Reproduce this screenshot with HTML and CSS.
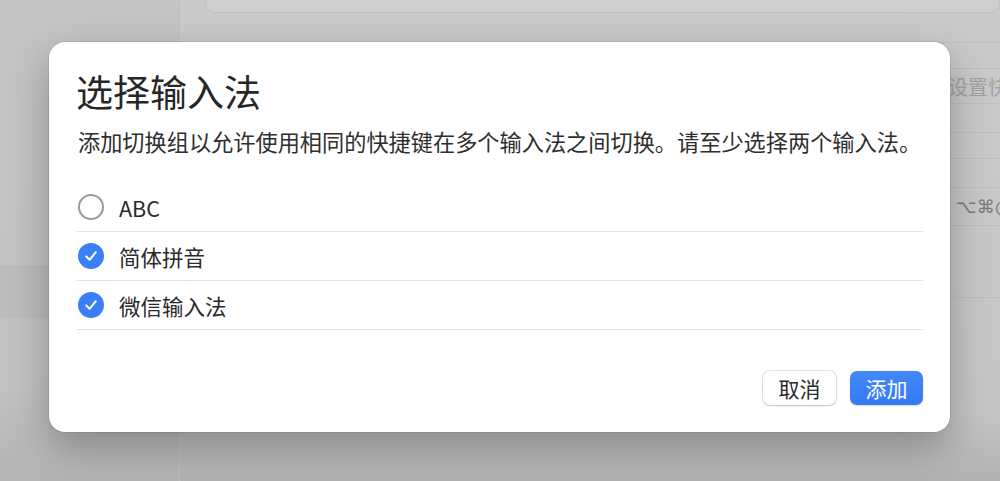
FILE: index.html
```html
<html lang="zh-CN"><head>
  <meta charset="UTF-8">
  <meta name="viewport" content="width=device-width, initial-scale=1.0">
  <title>选择输入法</title>
  <link rel="stylesheet" href="styles.css">
</head>
<body>
  <div class="window">
    <div class="sidebar">
      <div class="side-row"></div>
      <div class="side-row selected"></div>
    </div>
    <div class="main">
      <div class="top-card"></div>
      <div class="set-row r1"></div>
      <div class="set-row r2"></div>
      <div class="set-row r3"><span class="field">设置快捷键</span></div>
      <div class="set-row r4"></div>
      <div class="set-row r5"></div>
      <div class="set-row r6"></div>
      <div class="set-row r7"><span class="field keys">⌥⌘@</span></div>
      <div class="set-row r8"></div>
    </div>
  </div>

  <div class="dialog">
    <h1 class="dlg-title">选择输入法</h1>
    <p class="dlg-text">添加切换组以允许使用相同的快捷键在多个输入法之间切换。请至少选择两个输入法。</p>

    <ul class="im-list">
      <li class="im-item">
        <span class="check"></span>
        <span class="im-name">ABC</span>
      </li>
      <li class="im-item">
        <span class="check on">
          <svg viewBox="0 0 26 26" width="26" height="26"><path d="M8.2 13.4 L11.6 16.8 L17.8 9.2" fill="none" stroke="#fff" stroke-width="2" stroke-linecap="round" stroke-linejoin="round"/></svg>
        </span>
        <span class="im-name">简体拼音</span>
      </li>
      <li class="im-item">
        <span class="check on">
          <svg viewBox="0 0 26 26" width="26" height="26"><path d="M8.2 13.4 L11.6 16.8 L17.8 9.2" fill="none" stroke="#fff" stroke-width="2" stroke-linecap="round" stroke-linejoin="round"/></svg>
        </span>
        <span class="im-name">微信输入法</span>
      </li>
    </ul>

    <div class="dlg-buttons">
      <button class="btn">取消</button>
      <button class="btn primary">添加</button>
    </div>
  </div>
</body></html>
```

FILE: styles.css
```css
 body {
   margin: 0;
   width: 1000px;
   height: 481px;
   overflow: hidden;
   font-family: "Noto Sans CJK SC", "Noto Sans", sans-serif;
   background-color: #c8c8c8;
 }

 /* 背景里被遮住的设置窗口 */
 .window {
   display: flex;
   height: 481px;
 }
 .sidebar {
   flex: 0 0 179px;
   background: linear-gradient(#c4c4c4, #c2c2c2 80%, #b4b4b4);
   border-right: 1px solid #c0c0c0;
   display: flex;
   flex-direction: column;
 }
 .side-row {
   height: 265px;
 }
 .side-row.selected {
   height: 53px;
   background-color: #bcbcbc;
 }
 .main {
   flex: 1;
   min-width: 0;
   overflow: hidden;
   padding-left: 25px;
   display: flex;
   flex-direction: column;
   background: linear-gradient(#cacaca, #c6c6c6 85%, #b2b2b2);
 }
 .top-card {
   flex: 0 0 12px;
   background-color: #cfcfcf;
   border: 1px solid #c2c2c2;
   border-top: none;
   border-radius: 0 0 10px 10px;
 }
 .set-row {
   flex: none;
   border-bottom: 1px solid #bebebe;
   display: flex;
   align-items: center;
   padding-left: 743px;
   box-sizing: border-box;
 }
 .r1 { height: 30px; }
 .r2 { height: 26px; }
 .r3 { height: 35px; }
 .r4 { height: 29px; }
 .r5 { height: 26px; }
 .r6 { height: 29px; }
 .r7 { height: 38px; }
 .r8 { height: 72px; }
 .field {
   white-space: nowrap;
   font-size: 20px;
   color: #a2a2a2;
 }
 .field.keys {
   color: #7a7a7a;
   padding-left: 8px;
   font-family: "DejaVu Sans", sans-serif;
   font-size: 18px;
 }

 /* 弹出的对话框 */
 .dialog {
   position: absolute;
   left: 49px;
   top: 42px;
   width: 901px;
   height: 390px;
   box-sizing: border-box;
   padding: 23px 27px 27px 27px;
   background-color: #ffffff;
   border-radius: 16px;
   box-shadow: 0 0 0 1px rgba(0, 0, 0, 0.08), 0 16px 40px rgba(0, 0, 0, 0.28);
   display: flex;
   flex-direction: column;
 }
 .dlg-title {
   margin: 0;
   font-size: 37px;
   font-weight: 400;
   line-height: 52px;
   color: #262626;
 }
 .dlg-text {
   margin: 9px 0 0 2px;
   font-size: 22.2px;
   line-height: 30px;
   color: #2e2e2e;
 }
 .im-list {
   list-style: none;
   margin: 27px 0 0 0;
   padding: 0;
 }
 .im-item {
   height: 48px;
   border-bottom: 1px solid #e3e3e3;
   display: flex;
   align-items: center;
   gap: 15px;
   padding-left: 2px;
 }
 .check {
   width: 26px;
   height: 26px;
   box-sizing: border-box;
   border-radius: 50%;
   border: 2px solid #9a9a9a;
   display: flex;
 }
 .check.on {
   border: none;
   background-color: #3a7ff6;
 }
 .im-name {
   font-size: 21.5px;
   color: #2a2a2a;
 }
 .dlg-buttons {
   margin-top: auto;
   display: flex;
   justify-content: flex-end;
   gap: 14px;
 }
 .btn {
   width: 73px;
   height: 34px;
   padding: 0;
   font-family: "Noto Sans CJK SC", sans-serif;
   font-size: 21px;
   color: #2a2a2a;
   background-color: #ffffff;
   border: none;
   border-radius: 7px;
   box-shadow: 0 0 0 1px rgba(0, 0, 0, 0.1), 0 1px 2px rgba(0, 0, 0, 0.15);
 }
 .btn.primary {
   color: #ffffff;
   background: linear-gradient(#4489f7, #3479f5);
   box-shadow: 0 1px 2px rgba(0, 0, 0, 0.15);
 }
```
